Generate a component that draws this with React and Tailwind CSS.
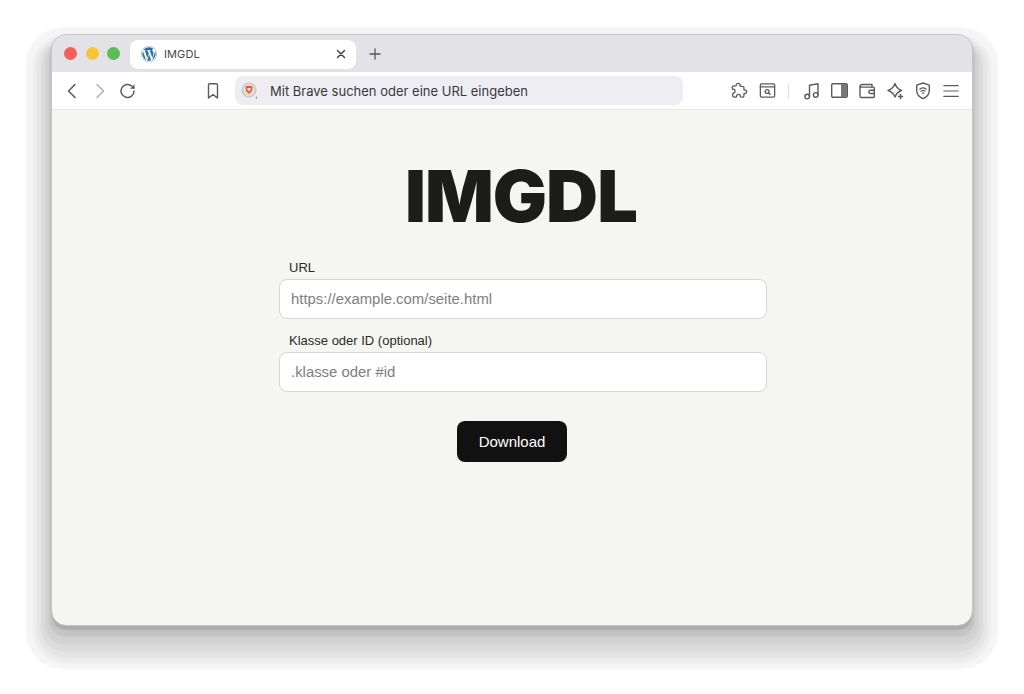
import React from "react";
import { FaWordpress } from "react-icons/fa";

const S = ({ children, w = 20, h = 20, vb = "0 0 20 20", sw = 1.4, c = "#5c5c60" }) => (
  <svg width={w} height={h} viewBox={vb} fill="none" stroke={c} strokeWidth={sw} strokeLinecap="round" strokeLinejoin="round">
    {children}
  </svg>
);

const Btn = ({ children, className = "w-[28px]" }) => (
  <div className={`h-[28px] flex items-center justify-center shrink-0 ${className}`}>{children}</div>
);

export default function App() {
  return (
    <div className="w-[1024px] h-[694px] bg-white pl-[52px] pt-[35px] overflow-hidden">
      <div className="w-[920px] h-[590px] rounded-[14px] overflow-hidden flex flex-col font-['Inter',sans-serif] outline outline-1 outline-[#c4c4c4] shadow-[0_5px_2px_0px_#adadad,0_9px_2px_3px_#c4c4c4,0_13px_2px_7px_#d2d2d2,0_16px_2px_11px_#dcdcdc,0_18px_2px_15px_#e5e5e5,0_19px_2px_19px_#ededed,0_18px_2px_26px_#f5f5f5]">
        <div className="h-[37px] bg-[#e2e2e7] flex items-center shrink-0">
          <div className="flex gap-[8.5px] pl-[12px] w-[78px] shrink-0">
            <span className="w-[13px] h-[13px] rounded-full bg-[#f2605b]" />
            <span className="w-[13px] h-[13px] rounded-full bg-[#f5c535]" />
            <span className="w-[13px] h-[13px] rounded-full bg-[#5cbd57]" />
          </div>
          <div className="w-[226px] h-[29px] mt-[1px] bg-white rounded-[8px] flex items-center pl-[11px] pr-[10px]">
            <FaWordpress size={16} color="#2f6f9f" />
            <span className="ml-[7px] text-[11px] text-[#48484c] tracking-[0.1px]">IMGDL</span>
            <svg className="ml-auto" width="10" height="10" viewBox="0 0 10 10" fill="none" stroke="#44444a" strokeWidth="1.5" strokeLinecap="round">
              <path d="M1.5 1.5l7 7M8.5 1.5l-7 7" />
            </svg>
          </div>
          <svg className="ml-[13px]" width="12" height="12" viewBox="0 0 12 12" fill="none" stroke="#58585c" strokeWidth="1.3" strokeLinecap="round">
            <path d="M6 1v10M1 6h10" />
          </svg>
        </div>

        <div className="h-[38px] bg-white border-b border-[#e8e8e6] flex items-center pl-[6px] shrink-0">
          <Btn>
            <S><path d="M13 3.500L6.500 10l6.500 6.500" strokeWidth="1.600" /></S>
          </Btn>
          <Btn>
            <S c="#b0b0b4"><path d="M7 3.500L13.500 10 7 16.500" strokeWidth="1.500" /></S>
          </Btn>
          <Btn>
            <S>
              <path d="M16 10a6.500 6.500 0 1 1-2-4.700L16 7" strokeWidth="1.500" />
              <path d="M16.200 3.800v3.600h-3.600" fill="#5c5c60" strokeWidth="0.600" />
            </S>
          </Btn>
          <Btn className="w-[28px] ml-[57px]">
            <S><path d="M5.500 3.800c0-.6.400-1 1-1h7c.6 0 1 .4 1 1V17L10 13.600 5.500 17V3.800z" /></S>
          </Btn>
          <div className="ml-[8px] w-[448px] h-[29px] bg-[#eeeef2] rounded-[8px] flex items-center pl-[6px] shrink-0">
            <svg width="17" height="17" viewBox="0 0 17 17">
              <circle cx="8" cy="8" r="7" fill="#e3d9d6" stroke="#c4c4c4" strokeWidth="1.200" />
              <path d="M4.500 5l1-1h5l1 1-.6 4L8 12 5.100 9z" fill="#e9573a" />
              <path d="M6 6h4l-.6 2L8 9.500 6.600 8z" fill="#fbe3dc" />
              <circle cx="15.500" cy="15.500" r="0.900" fill="#9a9a9a" />
            </svg>
            <span className="ml-[12px] mt-[2px] text-[13px] text-[#38383c]">Mit Brave suchen oder eine URL eingeben</span>
          </div>
          <Btn className="w-[28px] ml-[42px]">
            <S w={20} h={20}>
              <path d="M7.500 3.600c.3-1.500 3.700-1.600 4 .2.1.8-.4 1.100-.3 1.600.1.4 3.200.1 3.900.6.700.5.100 2.900.4 3.300.3.400 1 .1 1.700.3 1.500.5 1.400 3.100-.1 3.500-.7.2-1.300-.2-1.600.2-.3.4.2 2.700-.4 3.400-.6.600-2.900.3-3.400-.1-.4-.3.1-1-.2-1.600-.7-1.300-3.300-1.200-3.800.2-.2.700.2 1.200-.2 1.500-.5.400-3 .3-3.600-.3-.6-.6-.3-3-.1-3.400.2-.4 1-.3 1.500-.6 1.400-.8 1-3.400-.6-3.700-.7-.1-1.200.2-1.400-.2-.4-.6-.2-2.400.3-3 .6-.6 2.800-.3 3.400-.5.500-.2.400-.9.500-1.400z" transform="translate(0.300 0) scale(0.950)" />
            </S>
          </Btn>
          <Btn>
            <S w={19} h={19}>
              <rect x="2.500" y="3" width="15" height="14" rx="1.200" />
              <path d="M2.500 6.200h15" />
              <circle cx="9.600" cy="11" r="2" />
              <path d="M11.200 12.600l1.700 1.500" />
            </S>
          </Btn>
          <div className="w-[1px] h-[16px] bg-[#e0e0e4] ml-[7px]" />
          <Btn className="w-[28px] ml-[8.500px]">
            <S w={20} h={20}>
              <path d="M7.500 15.500V4.200L16 2.800v11" />
              <circle cx="5.200" cy="15.600" r="2.300" />
              <circle cx="13.700" cy="13.900" r="2.300" />
            </S>
          </Btn>
          <Btn>
            <svg width="17" height="15" viewBox="0 0 17 15">
              <rect x="0.700" y="0.700" width="15.600" height="13.600" rx="1.200" fill="#fff" stroke="#5c5c60" strokeWidth="1.400" />
              <rect x="10" y="1" width="6" height="13" fill="#77777b" />
            </svg>
          </Btn>
          <Btn className="w-[27px]">
            <S w={20} h={20}>
              <path d="M3 6.200c0-1.500.8-2.700 2.500-2.700H15v2.700" />
              <path d="M3 6v9c0 .9.600 1.500 1.500 1.500h12c.5 0 .8-.4.8-.9V7c0-.5-.3-.9-.8-.9H3" />
              <path d="M17 9.300h-3.600a1.500 1.500 0 0 0 0 3.200H17" />
            </S>
          </Btn>
          <Btn>
            <S w={20} h={20}>
              <path d="M10 2.500c1 3.600 2.800 5.600 6.500 7-3 1.100-5 2.800-6.500 6.500C8.800 12.600 6.600 10.800 3 9.500 6.500 8.200 8.900 6.200 10 2.500z" />
              <path d="M15.500 13.500v4M13.500 15.500h4" strokeWidth="1.600" />
            </S>
          </Btn>
          <Btn>
            <S w={20} h={20}>
              <path d="M10 2l6.300 2.200v5.300c0 3.700-2.600 6.500-6.300 8.200-3.700-1.700-6.300-4.500-6.300-8.200V4.200z" />
              <path d="M6.800 8.200c1.900-1.500 4.500-1.500 6.400 0M8 10.200c1.200-.9 2.800-.9 4 0" strokeWidth="1.200" />
              <circle cx="10" cy="12.300" r="0.700" fill="#5c5c60" strokeWidth="0.500" />
            </S>
          </Btn>
          <Btn>
            <S w={18} h={18} sw={1.300}>
              <path d="M2 4h16M2 10h16M2 16h16" />
            </S>
          </Btn>
        </div>

        <main className="flex-1 bg-[#f5f5f2] flex flex-col">
          <h1 className="ml-[353px] mt-[42px] w-[231px] text-center whitespace-nowrap text-[72px] leading-[87px] font-[900] text-[#1c1c1a] tracking-[-1px]">IMGDL</h1>
          <form className="ml-[227px] mt-[21px] w-[488px] flex flex-col font-['Liberation_Sans',sans-serif]">
            <label className="pl-[10px] text-[13px] leading-[16px] text-[#2a2a2a]">URL</label>
            <input readOnly placeholder="https://example.com/seite.html" className="mt-[3px] h-[40px] w-full rounded-[8px] border border-[#d6d6d6] bg-white px-[11px] text-[14.900px] placeholder:text-[#808080] outline-none" />
            <label className="pl-[10px] mt-[14px] text-[13px] leading-[16px] text-[#2a2a2a]">Klasse oder ID (optional)</label>
            <input readOnly placeholder=".klasse oder #id" className="mt-[3px] h-[40px] w-full rounded-[8px] border border-[#d6d6d6] bg-white px-[11px] text-[14.900px] placeholder:text-[#808080] outline-none" />
          </form>
          <button className="self-center mt-[29px] w-[110px] h-[41px] pt-[1px] rounded-[8px] bg-[#111111] text-white text-[15px] font-['Liberation_Sans',sans-serif]">Download</button>
        </main>
      </div>
    </div>
  );
}
